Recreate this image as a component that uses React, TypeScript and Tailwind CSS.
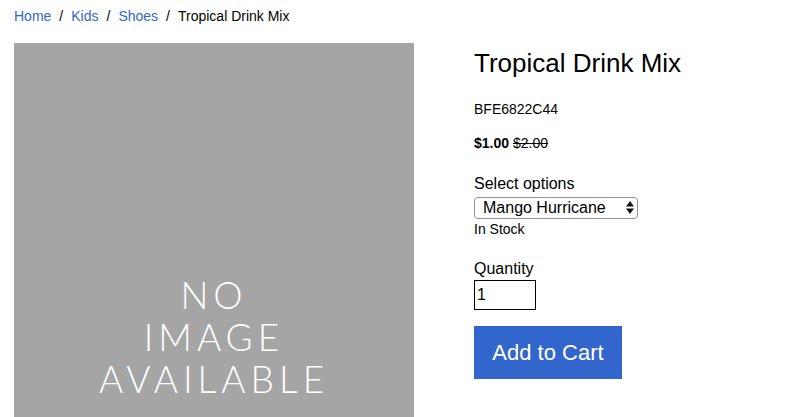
export default function App() {
  return (
    <div className="min-h-[417px] bg-white font-['Liberation_Sans',Arial,sans-serif] text-black">
      <nav className="flex items-center gap-[8px] px-[14px] pt-[7px] text-[14px] leading-[18px]">
        <a href="#" className="text-[#3366cc]">Home</a>
        <span>/</span>
        <a href="#" className="text-[#3366cc]">Kids</a>
        <span>/</span>
        <a href="#" className="text-[#3366cc]">Shoes</a>
        <span>/</span>
        <span>Tropical Drink Mix</span>
      </nav>

      <div className="flex gap-[60px] px-[14px] pt-[18px]">
        <div className="flex h-[400px] w-[400px] shrink-0 items-end justify-center bg-[#a5a5a5] pb-[43px]">
          <div className="text-center font-['Lato',sans-serif] text-[37px] font-light leading-[42px] tracking-[5px] text-white">
            NO
            <br />
            IMAGE
            <br />
            AVAILABLE
          </div>
        </div>

        <div className="flex flex-col items-start pt-[5px]">
          <h1 className="text-[26px] leading-[30px]">Tropical Drink Mix</h1>
          <p className="mt-[23px] text-[14px] leading-[16px]">BFE6822C44</p>
          <p className="mt-[18px] text-[14px] leading-[16px]">
            <span className="font-bold">$1.00</span> <s>$2.00</s>
          </p>

          <label className="mt-[23px] text-[16px] leading-[19px]">Select options</label>
          <div className="relative mt-[4px] h-[22px] w-[164px] rounded-[4px] border border-[#949494] bg-white">
            <span className="absolute left-[8px] top-0 text-[16px] leading-[19px]">Mango Hurricane</span>
            <svg className="absolute right-[3px] top-[3px]" width="8" height="13" viewBox="0 0 8 13">
              <path d="M4 0 L8 5.5 L0 5.5 Z" fill="#111" />
              <path d="M0 7.5 L8 7.5 L4 13 Z" fill="#111" />
            </svg>
          </div>
          <p className="mt-[2px] text-[14px] leading-[17px]">In Stock</p>

          <label className="mt-[21px] text-[16px] leading-[19px]">Quantity</label>
          <div className="mt-[2px] flex h-[30px] w-[62px] items-center border border-black pl-[2px] text-[16px]">
            1
          </div>

          <button className="mt-[16px] h-[53px] w-[148px] bg-[#3366cc] text-[22px] text-white">
            Add to Cart
          </button>
        </div>
      </div>
    </div>
  );
}
